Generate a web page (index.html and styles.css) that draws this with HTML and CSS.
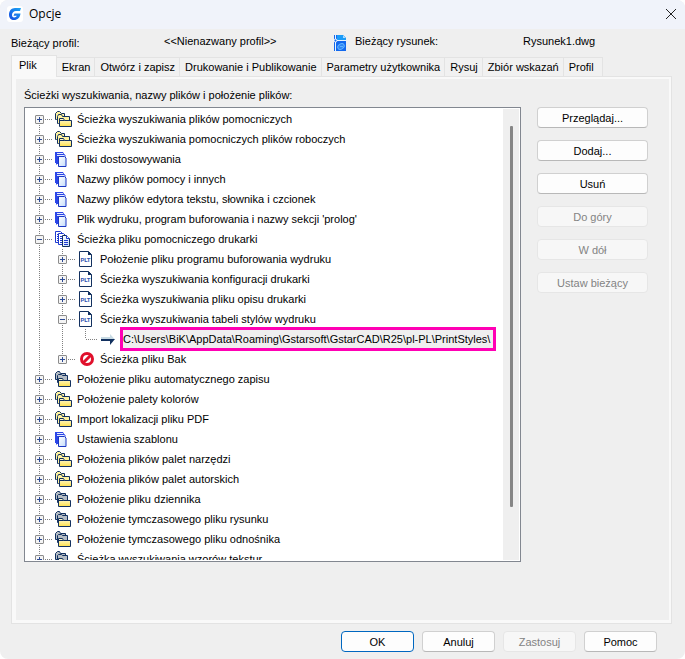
FILE: index.html
```html
<!DOCTYPE html>
<html lang="pl">
<head>
  <meta charset="UTF-8" />
  <title>Opcje</title>
  <link rel="stylesheet" href="styles.css">
</head>
<body>
  <!-- icon set -->
  <svg class="sprite" width="0" height="0" aria-hidden="true">
    <defs>
      <linearGradient id="yellow" x1="0" y1="0" x2="0" y2="1">
        <stop offset="0" stop-color="#fffbe0" />
        <stop offset="1" stop-color="#ffe14a" />
      </linearGradient>
      <linearGradient id="paper" x1="0" y1="0" x2="1" y2="1">
        <stop offset="0" stop-color="#ffffff" />
        <stop offset="1" stop-color="#c4dcfa" />
      </linearGradient>
      <linearGradient id="brand" x1="1" y1="0" x2="0" y2="1">
        <stop offset="0" stop-color="#1ba8f5" />
        <stop offset="1" stop-color="#1647e0" />
      </linearGradient>
    </defs>
    <symbol id="folders" viewBox="0 0 18 18">
      <g fill="#fff3a0" stroke="#12305f">
        <path d="M1.500 9.500h-1v-6l2-2h2l2 2h3v6z" />
        <path d="M3.500 13.500h-1v-7l1-2h3l1 2h7v7z" />
        <path d="M4.500 16.500v-8h4l1 2h7v6z" fill="url(#yellow)" />
        <path d="M4.500 10.500h5" />
      </g>
    </symbol>
    <symbol id="folders-gray" viewBox="0 0 18 18">
      <g fill="#b4bcc4" stroke="#12305f">
        <path d="M.5 9.500v-6l2-2h2l1 2h5v6z" />
        <path d="M2.500 12.500v-7l1-1h3l1 1h5v7z" />
        <path d="M3.500 16.500v-8h4l1 2h7v6z" fill="url(#yellow)" />
        <path d="M3.500 10.500h5" />
      </g>
    </symbol>
    <symbol id="pages" viewBox="0 0 18 18">
      <path d="M0 2h8l1 2v10H1v-1H0z" fill="#2b45e8" />
      <path d="M2 3.500h6M2 5.500h7" stroke="#dfe8ff" />
      <path d="M1.500 14.500v-10h8l1 2" fill="none" stroke="#2b45e8" />
      <path d="M3.500 6.500h6l1.500 1.500v8.500h-7.500z" fill="url(#paper)" stroke="#1a36c4" />
    </symbol>
    <symbol id="copies" viewBox="0 0 18 18">
      <g fill="#fff" stroke="#1f3bd0">
        <path d="M.5 1.500h5l2 2v9h-7z" />
        <path d="M2 4.500h3M2 6.500h3M2 8.500h3M2 10.500h3" />
        <path d="M3.500 3.500h5l2 2v9h-7z" />
        <path d="M5 6.500h3M5 8.500h3M5 10.500h3M5 12.500h3" />
        <path d="M7.500 5.500h4l3 3v8h-7z" fill="url(#paper)" stroke="#12305f" />
        <path d="M11.500 5.500v3h3M9 10.500h4M9 12.500h4M9 14.500h4" />
      </g>
    </symbol>
    <symbol id="plt" viewBox="0 0 18 18">
      <path d="M1.500 1.500h9l3 3v12h-12z" fill="#fff" stroke="#12305f" />
      <path d="M10 1v4h4z" fill="#12305f" />
      <text x="7.500" y="12" text-anchor="middle" font-size="6" font-weight="bold" font-family="Roboto, sans-serif" fill="#2f55b0">PLT</text>
    </symbol>
    <symbol id="blocked" viewBox="0 0 18 18">
      <circle cx="9" cy="9" r="5.500" fill="#fff" stroke="#e0102c" stroke-width="3" />
      <path d="M5 13l8-8" stroke="#e0102c" stroke-width="3" />
    </symbol>
    <symbol id="arrow" viewBox="0 0 18 18">
      <path d="M0 7h9V4l5 5.500H0z" fill="#c9dbe4" />
      <path d="M0 9h14l-5 6v-4H0z" fill="#12305f" />
    </symbol>
  </svg>

  <div class="dialog">
    <header class="titlebar">
      <svg class="app-icon" viewBox="0 0 16 16" aria-hidden="true">
        <rect width="16" height="16" rx="3" fill="#fff" />
        <path d="M14 2H8C4.500 2 2 4.800 2 8.500S4 14 7 14c3.700 0 6-2.200 6.500-6.500H7.500L6.500 9.700h3.300c-.5 1.200-1.300 1.700-2.600 1.700-1.500 0-2.200-1-2.200-2.500 0-2.200 1.700-4 4-4h4z" fill="url(#brand)" />
      </svg>
      <h1 class="title">Opcje</h1>
      <button type="button" class="close" aria-label="Zamknij">
        <svg viewBox="0 0 10 10" aria-hidden="true"><path d="M0 0l10 10M10 0L0 10" stroke="#222" /></svg>
      </button>
    </header>

    <div class="profile">
      <span class="profile-label">Bieżący profil:</span>
      <span class="profile-name">&lt;&lt;Nienazwany profil&gt;&gt;</span>
      <svg class="drawing-icon" viewBox="0 0 14 18" aria-hidden="true">
        <path d="M1 1h9l3 3v13H1z" fill="#1268ee" />
        <path d="M4 1h6l3 3v2H4z" fill="#1b9cf8" />
        <path d="M10 1l3 3h-3z" fill="#a8dcff" />
        <path d="M2.500 1v16M0 6.500h13" stroke="#e6f4ff" />
        <circle cx="2.500" cy="6.500" r="1.500" fill="#1268ee" stroke="#fff" />
        <ellipse cx="8" cy="12.500" rx="3.500" ry="2.500" transform="rotate(-35 8 12.500)" fill="#2f86f5" stroke="#62b4ff" />
        <path d="M7 12.500h3" stroke="#62b4ff" />
      </svg>
      <span class="drawing-label">Bieżący rysunek:</span>
      <span class="drawing-name">Rysunek1.dwg</span>
    </div>

    <div class="tabs" role="tablist">
      <button type="button" role="tab" class="tab active" aria-selected="true">Plik</button>
      <button type="button" role="tab" class="tab">Ekran</button>
      <button type="button" role="tab" class="tab">Otwórz i zapisz</button>
      <button type="button" role="tab" class="tab">Drukowanie i Publikowanie</button>
      <button type="button" role="tab" class="tab">Parametry użytkownika</button>
      <button type="button" role="tab" class="tab">Rysuj</button>
      <button type="button" role="tab" class="tab">Zbiór wskazań</button>
      <button type="button" role="tab" class="tab">Profil</button>
    </div>

    <main class="panel" role="tabpanel">
      <p class="caption" id="caption">Ścieżki wyszukiwania, nazwy plików i położenie plików:</p>
      <div class="columns">
        <div class="tree-box">
          <ul class="tree" aria-labelledby="caption">
            <li><div class="row"><button type="button" class="toggle" aria-label="Rozwiń"></button><i class="dots"></i><svg class="icon"><use href="#folders" /></svg><span>Ścieżka wyszukiwania plików pomocniczych</span></div></li>
            <li><div class="row"><button type="button" class="toggle" aria-label="Rozwiń"></button><i class="dots"></i><svg class="icon"><use href="#folders" /></svg><span>Ścieżka wyszukiwania pomocniczych plików roboczych</span></div></li>
            <li><div class="row"><button type="button" class="toggle" aria-label="Rozwiń"></button><i class="dots"></i><svg class="icon"><use href="#pages" /></svg><span>Pliki dostosowywania</span></div></li>
            <li><div class="row"><button type="button" class="toggle" aria-label="Rozwiń"></button><i class="dots"></i><svg class="icon"><use href="#pages" /></svg><span>Nazwy plików pomocy i innych</span></div></li>
            <li><div class="row"><button type="button" class="toggle" aria-label="Rozwiń"></button><i class="dots"></i><svg class="icon"><use href="#pages" /></svg><span>Nazwy plików edytora tekstu, słownika i czcionek</span></div></li>
            <li><div class="row"><button type="button" class="toggle" aria-label="Rozwiń"></button><i class="dots"></i><svg class="icon"><use href="#pages" /></svg><span>Plik wydruku, program buforowania i nazwy sekcji 'prolog'</span></div></li>
            <li>
              <div class="row"><button type="button" class="toggle open" aria-label="Zwiń"></button><i class="dots"></i><svg class="icon"><use href="#copies" /></svg><span>Ścieżka pliku pomocniczego drukarki</span></div>
              <ul>
                <li><div class="row"><button type="button" class="toggle" aria-label="Rozwiń"></button><i class="dots"></i><svg class="icon"><use href="#plt" /></svg><span>Położenie pliku programu buforowania wydruku</span></div></li>
                <li><div class="row"><button type="button" class="toggle" aria-label="Rozwiń"></button><i class="dots"></i><svg class="icon"><use href="#plt" /></svg><span>Ścieżka wyszukiwania konfiguracji drukarki</span></div></li>
                <li><div class="row"><button type="button" class="toggle" aria-label="Rozwiń"></button><i class="dots"></i><svg class="icon"><use href="#plt" /></svg><span>Ścieżka wyszukiwania pliku opisu drukarki</span></div></li>
                <li>
                  <div class="row"><button type="button" class="toggle open" aria-label="Zwiń"></button><i class="dots"></i><svg class="icon"><use href="#plt" /></svg><span>Ścieżka wyszukiwania tabeli stylów wydruku</span></div>
                  <ul>
                    <li class="last"><div class="row leaf"><i class="dots"></i><svg class="icon"><use href="#arrow" /></svg><span class="path">C:\Users\BiK\AppData\Roaming\Gstarsoft\GstarCAD\R25\pl-PL\PrintStyles\</span></div></li>
                  </ul>
                </li>
                <li class="last"><div class="row"><button type="button" class="toggle" aria-label="Rozwiń"></button><i class="dots"></i><svg class="icon"><use href="#blocked" /></svg><span>Ścieżka pliku Bak</span></div></li>
              </ul>
            </li>
            <li><div class="row"><button type="button" class="toggle" aria-label="Rozwiń"></button><i class="dots"></i><svg class="icon"><use href="#folders-gray" /></svg><span>Położenie pliku automatycznego zapisu</span></div></li>
            <li><div class="row"><button type="button" class="toggle" aria-label="Rozwiń"></button><i class="dots"></i><svg class="icon"><use href="#folders" /></svg><span>Położenie palety kolorów</span></div></li>
            <li><div class="row"><button type="button" class="toggle" aria-label="Rozwiń"></button><i class="dots"></i><svg class="icon"><use href="#folders" /></svg><span>Import lokalizacji pliku PDF</span></div></li>
            <li><div class="row"><button type="button" class="toggle" aria-label="Rozwiń"></button><i class="dots"></i><svg class="icon"><use href="#pages" /></svg><span>Ustawienia szablonu</span></div></li>
            <li><div class="row"><button type="button" class="toggle" aria-label="Rozwiń"></button><i class="dots"></i><svg class="icon"><use href="#folders" /></svg><span>Położenia plików palet narzędzi</span></div></li>
            <li><div class="row"><button type="button" class="toggle" aria-label="Rozwiń"></button><i class="dots"></i><svg class="icon"><use href="#folders" /></svg><span>Położenia plików palet autorskich</span></div></li>
            <li><div class="row"><button type="button" class="toggle" aria-label="Rozwiń"></button><i class="dots"></i><svg class="icon"><use href="#folders-gray" /></svg><span>Położenie pliku dziennika</span></div></li>
            <li><div class="row"><button type="button" class="toggle" aria-label="Rozwiń"></button><i class="dots"></i><svg class="icon"><use href="#folders-gray" /></svg><span>Położenie tymczasowego pliku rysunku</span></div></li>
            <li><div class="row"><button type="button" class="toggle" aria-label="Rozwiń"></button><i class="dots"></i><svg class="icon"><use href="#folders-gray" /></svg><span>Położenie tymczasowego pliku odnośnika</span></div></li>
            <li><div class="row"><button type="button" class="toggle" aria-label="Rozwiń"></button><i class="dots"></i><svg class="icon"><use href="#folders-gray" /></svg><span>Ścieżka wyszukiwania wzorów tekstur</span></div></li>
          </ul>
          <div class="scrollbar"><div class="thumb"></div></div>
        </div>

        <div class="actions">
          <button type="button" class="btn">Przeglądaj...</button>
          <button type="button" class="btn">Dodaj...</button>
          <button type="button" class="btn">Usuń</button>
          <button type="button" class="btn" disabled>Do góry</button>
          <button type="button" class="btn" disabled>W dół</button>
          <button type="button" class="btn" disabled>Ustaw bieżący</button>
        </div>
      </div>
    </main>

    <footer class="footer">
      <button type="button" class="btn default">OK</button>
      <button type="button" class="btn">Anuluj</button>
      <button type="button" class="btn" disabled>Zastosuj</button>
      <button type="button" class="btn">Pomoc</button>
    </footer>
  </div>
</body>
</html>
```
FILE: styles.css
```css
* {
  box-sizing: border-box;
}
body {
  margin: 0;
  background: #fff;
  color: #000;
  font-family: "Liberation Sans", Arial, sans-serif;
  font-size: 11px;
  line-height: 14px;
}
button {
  padding: 0;
  font: inherit;
  color: inherit;
}
ul {
  margin: 0;
  padding: 0;
  list-style: none;
}
.sprite {
  position: absolute;
}
.dialog {
  display: flex;
  flex-direction: column;
  height: 100vh;
  background: #efefef;
  border-radius: 8px;
  overflow: hidden;
}

/* title bar */
.titlebar {
  display: flex;
  align-items: center;
  height: 29px;
  padding: 0 5px 2px 7px;
  background: #f0f3fa;
}
.app-icon {
  width: 16px;
  height: 16px;
}
.title {
  flex: 1;
  margin: 0 0 0 6px;
  font-family: "Open Sans", sans-serif;
  font-size: 12px;
  font-weight: normal;
}
.close {
  display: flex;
  padding: 4px;
  border: none;
  background: none;
}
.close svg {
  width: 10px;
  height: 10px;
  overflow: visible;
}

/* profile line */
.profile {
  display: grid;
  grid-template-columns: 153px 169px 22px 168px 1fr;
  height: 26px;
  padding: 5px 11px 0;
}
.profile-label {
  padding-top: 2px;
}
.drawing-icon {
  width: 14px;
  height: 18px;
}

/* tabs */
.tabs {
  display: flex;
  align-items: flex-end;
  height: 21px;
  padding: 0 11px;
}
.tab {
  height: 19px;
  padding: 0 4px 0 5px;
  border: 1px solid #e3e3e3;
  border-width: 1px 1px 0 0;
  background: #f1f1f1;
  white-space: nowrap;
}
.tab.active {
  height: 22px;
  margin-bottom: -1px;
  padding: 0 19px 3px 7px;
  border-left-width: 1px;
  background: #f9f9f9;
  z-index: 1;
}
.tab:last-child {
  padding-right: 8px;
}

/* panel */
.panel {
  flex: 1;
  display: flex;
  flex-direction: column;
  min-height: 0;
  margin: 0 13px 0 11px;
  padding: 11px 23px 61px 8px;
  border: 1px solid #e3e3e3;
  box-shadow: inset 4px 2px #f9f9f9, inset -2px -3px #f9f9f9;
}
.caption {
  margin: 0 0 5px 4px;
}
.columns {
  flex: 1;
  display: flex;
  gap: 16px;
  min-height: 0;
  padding-left: 4px;
}
.tree-box {
  flex: 1;
  display: flex;
  padding: 1px;
  border: 1px solid #828790;
  background: #fff;
  overflow: hidden;
}
.tree {
  flex: 1;
  overflow: hidden;
}
.scrollbar {
  width: 16px;
  padding: 17px 6px 53px 7px;
  background: #efefef;
}
.thumb {
  width: 3px;
  height: 100%;
  border-radius: 1px;
  background: #868686;
}

/* tree rows and their dotted guides */
.tree li {
  background: repeating-linear-gradient(#808080 0 1px, transparent 1px 2px) 13px 0 / 1px 100% no-repeat;
}
.tree > li:first-child {
  background-position-y: 10px;
}
.tree li.last {
  background-size: 1px 10px;
}
.tree ul {
  padding-left: 23px;
}
.row {
  display: flex;
  align-items: center;
  height: 20px;
  padding-left: 9px;
  white-space: nowrap;
}
.toggle {
  width: 9px;
  height: 9px;
  border: 1px solid #8c8c8c;
  border-radius: 1px;
  background:
    linear-gradient(#2c4a94, #2c4a94) center / 5px 1px no-repeat,
    linear-gradient(#2c4a94, #2c4a94) center / 1px 5px no-repeat,
    #f4f4f4;
}
.toggle.open {
  background:
    linear-gradient(#2c4a94, #2c4a94) center / 5px 1px no-repeat,
    #f4f4f4;
}
.dots {
  width: 8px;
  height: 1px;
  background: repeating-linear-gradient(90deg, transparent 0 1px, #808080 1px 2px);
}
.leaf .dots {
  width: 13px;
  margin-left: 4px;
}
.icon {
  width: 18px;
  height: 18px;
  margin: 0 4px 0 3px;
}
.path {
  height: 18px;
  padding-right: 3px;
  line-height: 18px;
  background: #efefef;
  outline: 3px solid #ff00b4;
}

/* buttons */
.btn {
  height: 21px;
  border: 1px solid #d0d0d0;
  border-bottom-color: #b8b8b8;
  border-radius: 4px;
  background: #fdfdfd;
}
.btn:disabled {
  border-color: #e6e6e6;
  background: #f7f7f7;
  color: #838383;
}
.btn.default {
  border-color: #0067c0;
}
.actions {
  display: flex;
  flex-direction: column;
  gap: 12px;
  width: 111px;
}
.footer {
  display: flex;
  justify-content: flex-end;
  gap: 8px;
  padding: 7px 28px 7px;
}
.footer .btn {
  width: 73px;
}
```
